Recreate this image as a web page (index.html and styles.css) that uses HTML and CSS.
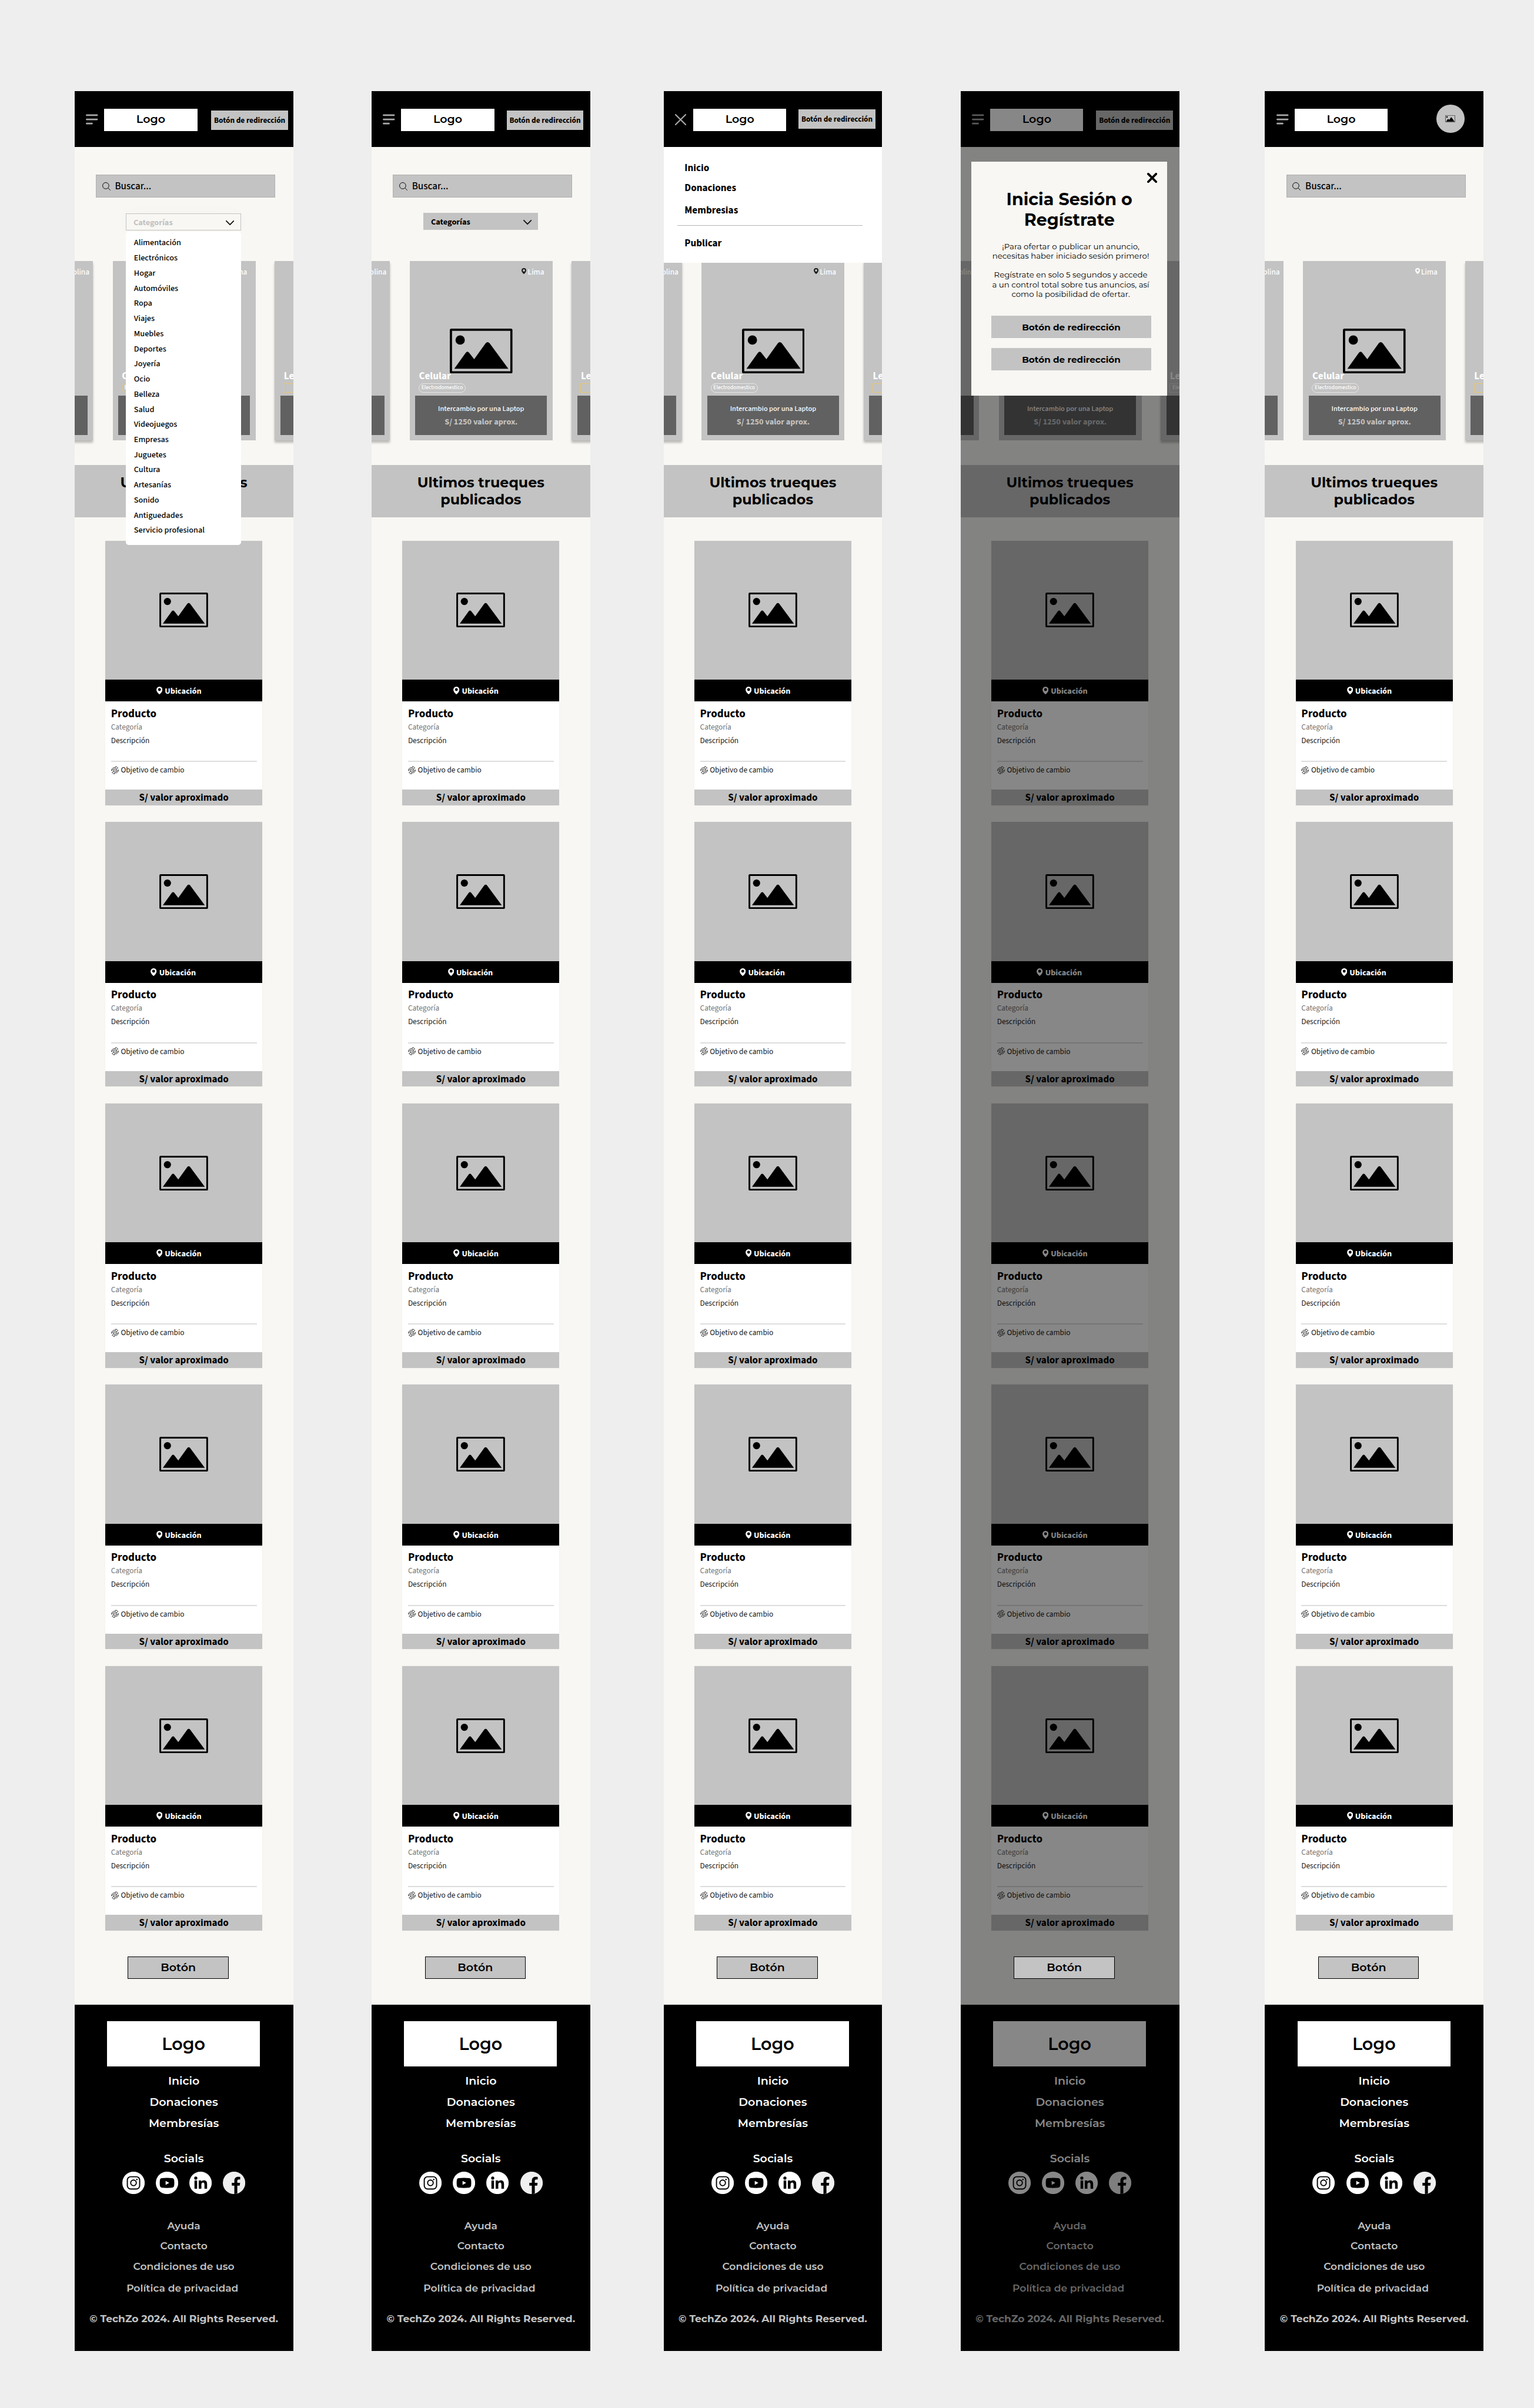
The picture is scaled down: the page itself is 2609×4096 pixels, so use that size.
FILE: index.html
```html
<!DOCTYPE html>
<html lang="es">
<head>
<meta charset="utf-8">
<title>TechZo – Trueques</title>
<link rel="stylesheet" href="styles.css">
</head>
<body>
<svg class="sprite" aria-hidden="true">
  <symbol id="i-image" viewBox="0 0 112 80">
    <rect x="2" y="2" width="108" height="76" rx="1" fill="none" stroke="currentColor" stroke-width="4"/>
    <circle cx="18.5" cy="20.4" r="8.3" fill="currentColor"/>
    <path fill="currentColor" d="M8 71.5 28.5 43q3-3.500 6 0L43.500 54.500 64 26q3.500-4 7 0L104.500 71.500Z"/>
  </symbol>
  <symbol id="i-burger" viewBox="0 0 22 19">
    <path d="M1.500 2h18.500M1.500 9.500h18.500M1.500 17h9.500" fill="none" stroke="currentColor" stroke-width="2.900" stroke-linecap="round"/>
  </symbol>
  <symbol id="i-close" viewBox="0 0 20 20">
    <path d="m1 1 18 18M19 1 1 19" fill="none" stroke="currentColor" stroke-width="2.200" stroke-linecap="round"/>
  </symbol>
  <symbol id="i-close-bold" viewBox="0 0 18 18">
    <path d="m2 2 14 14M16 2 2 16" fill="none" stroke="currentColor" stroke-width="4" stroke-linecap="round"/>
  </symbol>
  <symbol id="i-search" viewBox="0 0 15 15">
    <circle cx="6.200" cy="6.200" r="5.600" fill="none" stroke="currentColor"/>
    <path d="m10.200 10.200 4.300 4.300" stroke="currentColor"/>
  </symbol>
  <symbol id="i-chevron" viewBox="0 0 15 9">
    <path d="m1 1 6.500 6.500L14 1" fill="none" stroke="currentColor" stroke-width="1.900" stroke-linecap="round"/>
  </symbol>
  <symbol id="i-pin" viewBox="0 0 11 14">
    <path fill="currentColor" fill-rule="evenodd" d="M5.500 0a5.400 5.400 0 0 1 5.400 5.400C10.900 9 7 12.500 5.500 13.800 4 12.500.1 9 .1 5.400A5.400 5.400 0 0 1 5.500 0Zm0 2.700a2.600 2.600 0 1 0 0 5.200 2.600 2.600 0 0 0 0-5.200Z"/>
  </symbol>
  <symbol id="i-swap" viewBox="0 0 14 15">
    <g fill="none" stroke="currentColor" stroke-width=".9" stroke-linejoin="round">
      <path d="M.6 8.500C.5 5 3.500 2 8 2.600L8.300.6l4 2.600-3.300 3.500.1-2C6 4.200 3 5 .6 8.500Z"/>
      <path d="M13.400 6.500C13.500 10 10.500 13 6 12.400L5.700 14.400l-4-2.600 3.300-3.500-.1 2c3.100.5 6.100-.3 8.500-3.800Z"/>
      <path d="M3 8c2-2 4-1 5-.2S10 8.500 11 7"/>
    </g>
  </symbol>
  <symbol id="i-instagram" viewBox="0 0 40 40">
    <circle cx="20" cy="20" r="20" fill="#fff"/>
    <rect x="9" y="9" width="22" height="22" rx="6" fill="none" stroke="#000" stroke-width="2"/>
    <circle cx="20" cy="20" r="5" fill="none" stroke="#000" stroke-width="2"/>
    <circle cx="26" cy="14" r="1.300"/>
  </symbol>
  <symbol id="i-youtube" viewBox="0 0 40 40">
    <circle cx="20" cy="20" r="20" fill="#fff"/>
    <path d="M11 11.500q9-1 18 0 3.500.3 3.800 4 .5 4.500 0 9-.3 3.700-3.800 4-9 1-18 0-3.500-.3-3.800-4-.5-4.500 0-9 .3-3.700 3.800-4Z"/>
    <path d="m17.500 16.500 6.500 3.500-6.500 3.500Z" fill="#fff"/>
  </symbol>
  <symbol id="i-linkedin" viewBox="0 0 40 40">
    <circle cx="20" cy="20" r="20" fill="#fff"/>
    <circle cx="11.500" cy="11.500" r="2.800"/>
    <path d="M9.200 15.800h4.700v14.700H9.200Zm7.600 0h4.500v2c1-1.600 2.500-2.400 4.600-2.400 4.400 0 5.800 2.600 5.800 7v8.100H27v-7.500c0-2-.6-3.500-2.500-3.500-2 0-3 1.500-3 3.500v7.500h-4.700Z"/>
  </symbol>
  <symbol id="i-facebook" viewBox="0 0 40 40">
    <circle cx="20" cy="20" r="20" fill="#efefef"/>
    <path d="M20.500 40V25H16v-5h4.500v-3.500c0-5 2.500-7.300 6.700-7.300 1.500 0 2.800.1 3.800.3v4.400h-2.500c-2 0-2.700 1-2.700 2.800V20h5l-.7 5h-4.300v14Z"/>
  </symbol>
</svg>
<main class="board" id="board"></main>
<script src="app.js"></script>
</body>
</html>
```
FILE: styles.css
```css
/* 1rem = 10 design pixels */
html { font-size: 9.5323px; }
* { box-sizing: border-box; }
body {
  margin: 0;
  width: 273.7rem;
  height: 429.7rem;
  overflow: hidden;
  background: #eee;
  color: #000;
  font-family: "Source Sans 3", "Noto Sans CJK SC", "Noto Sans", sans-serif;
}
svg { display: block; flex: none; }
.sprite { position: absolute; width: 0; height: 0; }
.t { display: inline-block; white-space: nowrap; }
.brand, .band, .modal, .more, .footer { font-family: "Montserrat", Inter, sans-serif; }

.board { display: flex; align-items: flex-start; padding: 16.3rem 0 0 13.3rem; }
.screen {
  position: relative;
  flex: none;
  width: 39rem;
  height: 403.2rem;
  background: #f8f7f3;
}
.screen-2, .screen-4 { margin-left: 14rem; }
.screen-3 { margin-left: 13.1rem; }
.screen-5 { margin-left: 15.3rem; }

/* top bar */
.header { display: flex; align-items: flex-start; height: 9.9rem; padding-left: 2.05rem; background: #000; }
.toggle { width: 2.2rem; color: #aaa; }
.toggle svg { width: 2.2rem; height: 1.9rem; margin-top: 4rem; }
.toggle .x { width: 2rem; height: 2rem; margin-top: 4rem; }
.brand {
  display: flex; align-items: center; justify-content: center;
  width: 16.6rem; height: 4rem; margin: 3.1rem 0 0 1.05rem; padding-bottom: .1rem;
  background: #fff; font-size: 2rem; font-weight: 600; line-height: 1.2;
}
.login {
  display: flex; align-items: center; justify-content: center;
  width: 13.7rem; height: 3.5rem; margin: 3.4rem 0 0 2.2rem;
  background: #c3c3c3; font-size: 1.4rem; font-weight: 700;
}
.screen-1 .login { margin-left: 2.5rem; }
.screen-3 .login { margin-top: 3.2rem; }
.screen-4 .login { margin-left: 2.3rem; }
.avatar {
  display: flex; align-items: center; justify-content: center;
  width: 5rem; height: 5rem; margin: 2.4rem 0 0 8.7rem; border-radius: 50%; background: #c3c3c3;
}
.avatar svg { width: 1.8rem; height: 1.25rem; }

/* search and filter */
.filters { height: 20.4rem; padding-top: 5rem; }
.search {
  display: flex; align-items: center; width: 32rem; height: 4rem; margin-left: 3.8rem; padding: .1rem 0 0 1rem;
  border: .1rem solid #b0b0b0; background: #c3c3c3; font-size: 1.8rem; font-weight: 500;
}
.search svg { width: 1.5rem; height: 1.5rem; margin-right: .8rem; }
.select {
  display: flex; align-items: center; justify-content: space-between;
  width: 20.5rem; height: 3rem; margin: 2.8rem 0 0 9.2rem; padding: .4rem 1.1rem 0 1.4rem;
  background: #c3c3c3; font-size: 1.5rem; font-weight: 700; line-height: 1;
}
.select svg { width: 1.5rem; height: .9rem; color: #111; }
.select.open {
  margin-top: 2.9rem; padding: .3rem 1.1rem 0 1.2rem; border: .2rem solid #c3c3c3; background: #f8f7f3; color: #c3c3c3;
  box-shadow: 0 0 3rem rgba(0, 0, 0, .02);
}
.options {
  position: absolute; z-index: 2; top: 25rem; left: 9.2rem;
  width: 20.5rem; height: 55.9rem; margin: 0; padding: .71rem 0 0 1.4rem; list-style: none;
  border-radius: .5rem; background: #fff; font-size: 1.5rem; font-weight: 500; line-height: 2.7rem;
}

/* menu */
.menu {
  position: absolute; z-index: 2; top: 9.9rem; left: 0; display: flex; flex-direction: column; align-items: flex-start;
  width: 39rem; height: 20.7rem; padding: 2.76rem 0 0 3.75rem;
  background: #fff; font-size: 1.8rem; font-weight: 700; line-height: 2rem;
}
.menu span + span { margin-top: 1.58rem; }
.menu span:nth-child(3) { margin-top: 1.98rem; }
.menu hr { width: 33rem; height: .1rem; margin: 1.68rem 0 2.04rem -1.25rem; border: 0; background: #b5b5b5; }

/* featured slider */
.slider { height: 32rem; overflow-x: clip; overflow-y: visible; }
.track { display: flex; width: 83.4rem; margin-left: -22.2rem; }
.slide {
  position: relative; display: flex; flex-direction: column; flex: none;
  width: 25.5rem; height: 32rem; margin-right: 3.5rem; padding: 1.09rem 1rem 1rem; background: #c3c3c3; color: #fff;
}
.slide.main { margin-right: 3.4rem; }
.slide.side { box-shadow: 0 .4rem .4rem rgba(0, 0, 0, .25); }
.screen-4 .side:first-child, .screen-5 .side:first-child { box-shadow: none; }
.slide .picture { position: absolute; top: 12rem; left: 7.15rem; width: 11.2rem; height: 8rem; color: #000; }
.place { display: flex; justify-content: flex-end; height: 1.6rem; padding-right: .5rem; font-size: 1.4rem; font-weight: 500; line-height: 1.6rem; }
.slide:first-child .place { padding-right: 0; margin-right: -.35rem; }
.place svg { width: .85rem; height: 1.1rem; margin: .2rem .25rem 0 0; color: #1c1c1c; }
.screen-5 .place svg { color: #fff; }
.slide h3 { position: relative; margin: auto 0 0 .65rem; font-size: 1.8rem; font-weight: 700; line-height: 2rem; }
.tag {
  display: flex; align-items: center; justify-content: center; width: 8.4rem; height: 1.65rem; margin: .31rem 0 .55rem .6rem;
  border: .1rem solid #e6e6e6; border-radius: .9rem; font-size: 1rem; font-weight: 500; line-height: 1;
}
.side .tag { border-color: #e8c66c; border-radius: 0; }
.screen-1 .tag { border-color: #e8c66c; }
.screen-4 .side .tag { border-color: #d8d8d8; }
.offer { height: 7rem; padding-top: 1.46rem; background: #616161; text-align: center; font-size: 1.3rem; font-weight: 500; line-height: 1.8rem; }
.offer b { display: block; margin-top: .57rem; color: #c3c3c3; font-size: 1.5rem; }
.offer .t { display: block; }

.band { height: 9.3rem; margin: 4.4rem 0 4.2rem; padding-top: 1.7rem; background: #c3c3c3; text-align: center; font-size: 2.5rem; font-weight: 700; line-height: 3rem; }
.band .t, .modal .t { display: block; }

/* products */
.list { display: flex; flex-direction: column; gap: 3rem; width: 28rem; margin-left: 5.5rem; }
.card { height: 47.2rem; background: #fff; box-shadow: 0 0 .4rem rgba(0, 0, 0, .03); }
.photo { display: flex; align-items: center; justify-content: center; height: 24.8rem; background: #c3c3c3; }
.photo svg { width: 8.7rem; height: 6.2rem; }
.where { display: flex; align-items: center; height: 3.9rem; padding-left: 9.1rem; background: #000; color: #fff; font-size: 1.5rem; font-weight: 700; }
.card:nth-child(2) .where { padding-left: 8.1rem; }
.where svg { width: 1.1rem; height: 1.4rem; margin-right: .4rem; }
.where .t { padding-top: .15rem; }
.info { height: 15.7rem; padding: 1.2rem 1rem 0; font-size: 1.4rem; line-height: 1.6rem; color: #1a1a1a; }
.info h4 { margin: 0 0 .52rem; color: #000; font-size: 2rem; font-weight: 700; line-height: 2rem; }
.info .cat { height: 1.6rem; margin-bottom: .81rem; color: #777; }
.info .desc { height: 1.6rem; }
.info hr { height: .2rem; margin: 2.87rem 0 .6rem; border: 0; background: #ddd; }
.goal { display: flex; align-items: center; gap: .35rem; height: 1.6rem; }
.goal svg { width: 1.4rem; height: 1.5rem; }
.price { display: flex; align-items: center; justify-content: center; height: 2.8rem; padding-top: .05rem; background: #c3c3c3; font-size: 1.8rem; font-weight: 700; line-height: 1; }

.more {
  position: relative; z-index: 2; display: flex; align-items: center; justify-content: center;
  width: 18rem; height: 4rem; margin: 4.6rem 0 4.6rem 9.5rem;
  border: .1rem solid #000; background: #c3c3c3; font-size: 2rem; font-weight: 600;
}

/* footer */
.footer { display: flex; flex-direction: column; align-items: center; height: 61.8rem; padding-top: 3rem; background: #000; color: #fff; font-size: 2rem; font-weight: 600; line-height: 2.4rem; }
.footer .brand { width: 27.3rem; height: 8.1rem; margin: 0 .1rem 1.4rem 0; padding-bottom: 0; color: #000; font-size: 3rem; }
.footer .link { margin-bottom: 1.4rem; }
.footer .title { margin-top: 2.47rem; }
.socials { display: flex; gap: 2rem; margin: 1.03rem 0 4.54rem; }
.socials svg { width: 4rem; height: 4rem; }
.footer .legal { margin-bottom: 1.2rem; color: #c3c3c3; font-size: 1.8rem; }
.footer .policy { margin: .3rem .5rem 0 0; }
.footer .copy { margin-top: 3.04rem; color: #c3c3c3; font-size: 1.8rem; font-weight: 700; }

/* login dialog */
.dim { position: absolute; z-index: 1; inset: 0; background: rgba(0, 0, 0, .47); }
.modal {
  position: absolute; z-index: 3; top: 12.6rem; left: 1.9rem; width: 35rem; height: 41.7rem; padding-top: 4.75rem;
  background: #f8f7f3; text-align: center;
}
.modal .dismiss { position: absolute; top: 1.9rem; right: 1.8rem; width: 1.8rem; height: 1.8rem; }
.modal h2 { margin: 0 0 2.05rem; font-size: 3rem; font-weight: 700; line-height: 3.7rem; }
.modal p { margin: 0 0 1.7rem .5rem; font-size: 1.4rem; line-height: 1.7rem; }
.modal button {
  display: flex; align-items: center; justify-content: center; width: 28.5rem; height: 4rem; margin: 0 0 1.8rem 3.6rem; padding: .15rem 0 0;
  border: 0; background: #c3c3c3; color: #000; font: 700 1.6rem "Montserrat", Inter, sans-serif;
}
.modal p + button { margin-top: 3rem; }
```
FILE: app.js
```js
const icon = (id, cls = '') => `<svg class="${cls}"><use href="#i-${id}"/></svg>`;
const line = (text, cls = '') => `<span class="t ${cls}">${text}</span>`;

const categories = ['Alimentación', 'Electrónicos', 'Hogar', 'Automóviles', 'Ropa', 'Viajes', 'Muebles', 'Deportes',
  'Joyería', 'Ocio', 'Belleza', 'Salud', 'Videojuegos', 'Empresas', 'Juguetes', 'Cultura', 'Artesanías', 'Sonido',
  'Antiguedades', 'Servicio profesional'];

const screens = [
  { filter: 'open', login: true, extra: () => `<ul class="options">${categories.map(c => `<li>${c}</li>`).join('')}</ul>` },
  { filter: 'closed', login: true },
  { filter: 'closed', login: true, menu: true, extra: menu },
  { filter: 'closed', login: true, sideTag: 'Electrodomestico', extra: modal },
  { filter: '', login: false },
];

function menu() {
  return `<nav class="menu">${line('Inicio')}${line('Donaciones')}${line('Membresias')}<hr>${line('Publicar')}</nav>`;
}

function modal() {
  return `<div class="dim"></div><section class="modal">${icon('close-bold', 'dismiss')}
    <h2>${line('Inicia Sesión o')}${line('Regístrate')}</h2>
    <p>${line('¡Para ofertar o publicar un anuncio,')}${line('necesitas haber iniciado sesión primero!')}</p>
    <p>${line('Regístrate en solo 5 segundos y accede')}${line('a un control total sobre tus anuncios, así')}${line('como la posibilidad de ofertar.')}</p>
    <button>${line('Botón de redirección')}</button><button>${line('Botón de redirección')}</button></section>`;
}

const slide = ({ place = '', name = '', tag = '', main = false }) => `<article class="slide ${main ? 'main' : 'side'}">
    ${main ? icon('image', 'picture') : ''}
    <div class="place">${main ? icon('pin') : ''}${line(place)}</div>
    <h3>${name}</h3>
    <div class="tag">${line(tag)}</div>
    <div class="offer">${main ? line('Intercambio por una Laptop') + `<b>${line('S/ 1250 valor aprox.')}</b>` : ''}</div>
  </article>`;

const card = () => `<article class="card"><div class="photo">${icon('image')}</div>
  <div class="where">${icon('pin')}${line('Ubicación')}</div>
  <div class="info"><h4>Producto</h4><div class="cat">Categoría</div>
  <div class="desc">Descripción</div><hr><div class="goal">${icon('swap')}${line('Objetivo de cambio')}</div></div>
  <div class="price">${line('S/ valor aproximado')}</div></article>`;

const footer = () => `<footer class="footer"><div class="brand">${line('Logo')}</div>
  ${line('Inicio', 'link')}${line('Donaciones', 'link')}${line('Membresías', 'link')}
  ${line('Socials', 'title')}
  <div class="socials">${['instagram', 'youtube', 'linkedin', 'facebook'].map(n => icon(n)).join('')}</div>
  ${line('Ayuda', 'legal')}${line('Contacto', 'legal')}${line('Condiciones de uso', 'legal')}
  ${line('Política de privacidad', 'legal policy')}${line('© TechZo 2024. All Rights Reserved.', 'copy')}</footer>`;

const screen = (s, i) => `<section class="screen screen-${i + 1}">
  <header class="header"><div class="toggle">${s.menu ? icon('close', 'x') : icon('burger')}</div>
    <div class="brand">${line('Logo')}</div>
    ${s.login ? `<div class="login">${line('Botón de redirección')}</div>` : `<div class="avatar">${icon('image')}</div>`}</header>
  <div class="filters"><div class="search">${icon('search')}${line('Buscar...')}</div>
    ${s.filter ? `<div class="select ${s.filter}">${line('Categorías')}${icon('chevron')}</div>` : ''}</div>
  <div class="slider"><div class="track">
    ${slide({ place: 'La Molina' })}
    ${slide({ place: 'Lima', name: 'Celular', tag: 'Electrodomestico', main: true })}
    ${slide({ name: 'Lentes', tag: s.sideTag })}</div></div>
  <div class="band">${line('Ultimos trueques')}${line('publicados')}</div>
  <div class="list">${card().repeat(5)}</div>
  <div class="more">${line('Botón')}</div>
  ${footer()}${s.extra ? s.extra() : ''}</section>`;

document.getElementById('board').innerHTML = screens.map(screen).join('');
```
